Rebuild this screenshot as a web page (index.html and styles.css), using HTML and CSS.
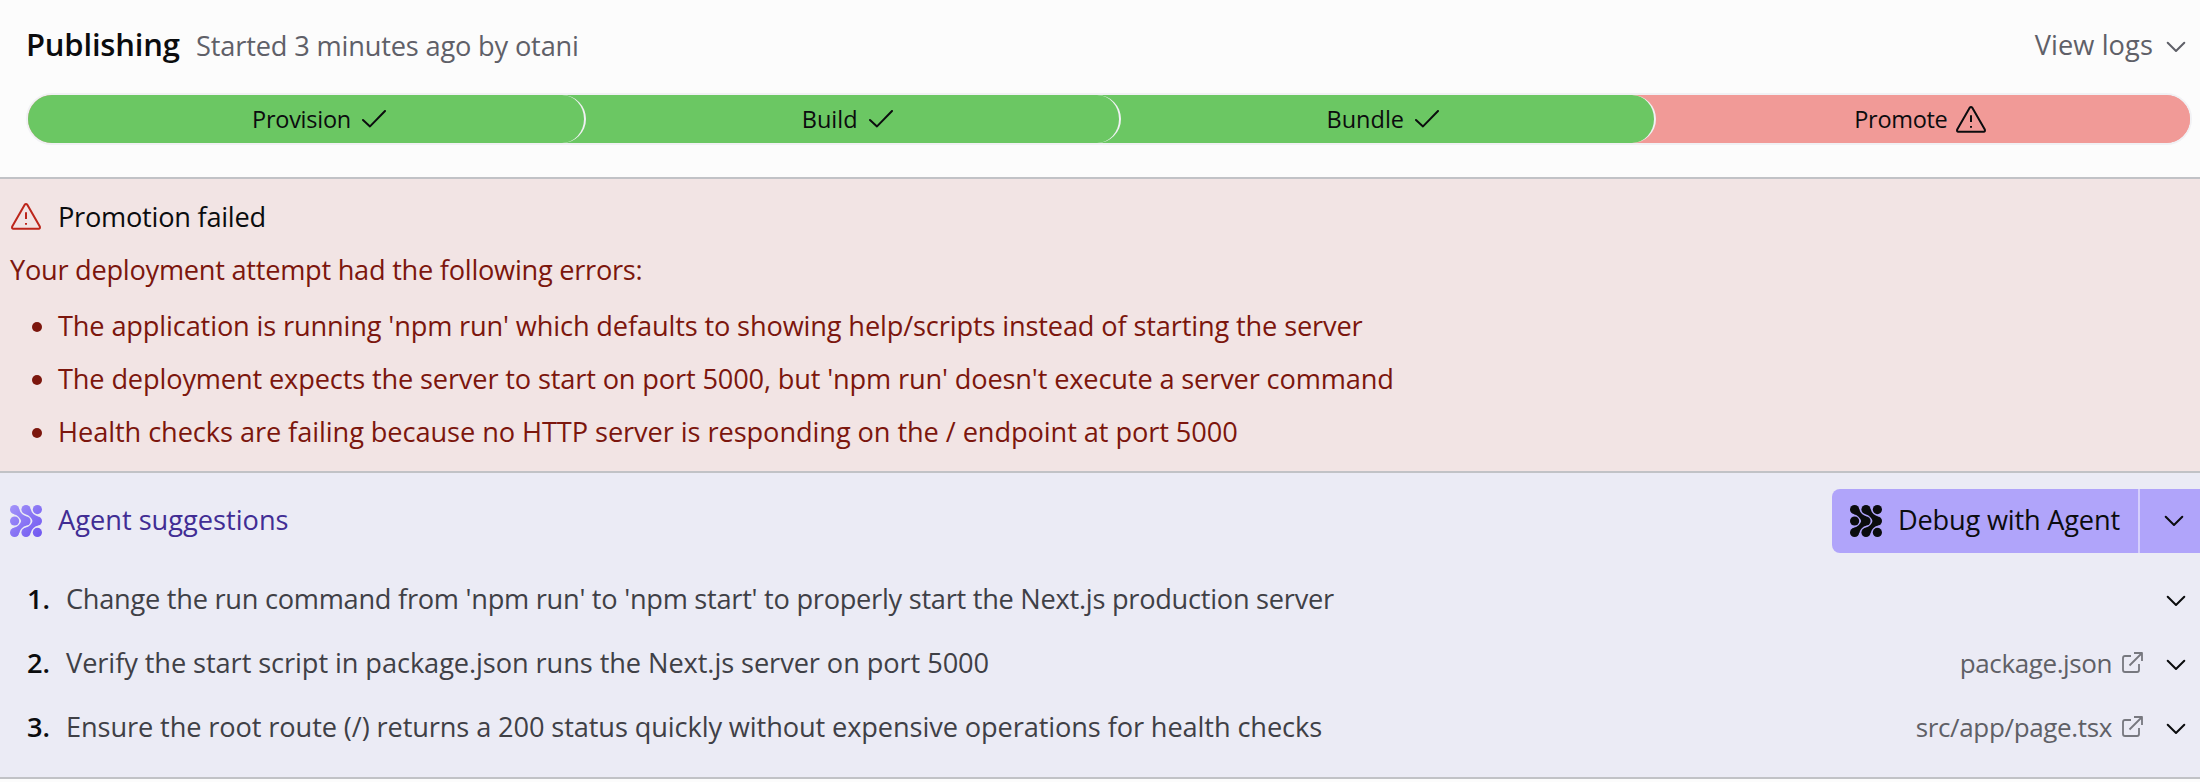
FILE: index.html
```html
<!DOCTYPE html>
<html lang="en">
<head>
<meta charset="utf-8">
<title>Publishing</title>
<link rel="stylesheet" href="styles.css">
</head>
<body>
<svg class="defs" width="0" height="0" aria-hidden="true">
  <defs>
    <linearGradient id="violet" gradientUnits="userSpaceOnUse" x1="0" y1="0" x2="32" y2="32">
      <stop offset="0" stop-color="#a394f9"/><stop offset="1" stop-color="#6f56f0"/>
    </linearGradient>
    <symbol id="agent" viewBox="0 0 32 32">
      <circle cx="4.6" cy="4.6" r="4.6"/><circle cx="16" cy="4.6" r="4.6"/><circle cx="27.4" cy="4.6" r="4.6"/>
      <circle cx="4.6" cy="16" r="4.6"/><circle cx="16" cy="16" r="4.6"/><circle cx="27.4" cy="16" r="4.6"/>
      <circle cx="4.6" cy="27.4" r="4.6"/><circle cx="16" cy="27.4" r="4.6"/><circle cx="27.4" cy="27.4" r="4.6"/>
      <path d="M9.2 4Q10.8 9.8 16.6 11.4L11.4 16.6Q9.8 10.8 4 9.2Z"/>
      <path d="M20.6 4Q22.2 9.8 28 11.4L22.8 16.6Q21.2 10.8 15.4 9.2Z"/>
      <path d="M9.2 28Q10.8 22.2 16.6 20.6L11.4 15.4Q9.8 21.2 4 22.8Z"/>
      <path d="M20.6 28Q22.2 22.2 28 20.6L22.8 15.4Q21.2 21.2 15.4 22.8Z"/>
    </symbol>
    <symbol id="chevron" viewBox="0 0 20 12"><path d="M1.7 1.7L10 10L18.3 1.7" fill="none" stroke="currentColor" stroke-width="2" stroke-linecap="round" stroke-linejoin="round"/></symbol>
    <symbol id="check" viewBox="0 0 24 18"><path d="M1 10L8 16.4L23 1" fill="none" stroke="currentColor" stroke-width="2" stroke-linecap="round" stroke-linejoin="round"/></symbol>
    <symbol id="warn" viewBox="0 0 30 27"><path d="M13.7 1.7Q15 .3 16.3 1.7L28.8 23.6Q29.4 25.6 27.6 25.8H2.4Q.6 25.6 1.2 23.6ZM15 9.3V16M15 20V21.8" fill="none" stroke="currentColor" stroke-width="2" stroke-linejoin="round"/></symbol>
    <symbol id="external" viewBox="0 0 22 22"><path d="M10 4H4Q2 4 2 6V18Q2 20 4 20H16Q18 20 18 18V12M13 1H21V9M20.5 1.5L8.5 13.5" fill="none" stroke="currentColor" stroke-width="1.8" stroke-linejoin="round"/></symbol>
  </defs>
</svg>

<header class="header">
  <div class="heading">
    <h1 class="title">Publishing</h1>
    <span class="started">Started 3 minutes ago by otani</span>
  </div>
  <div class="logs"><span class="logs-label">View logs</span><svg class="chevron"><use href="#chevron"/></svg></div>
</header>

<div class="stages">
  <div class="stage stage-1"><span class="t-provision">Provision</span><svg class="check"><use href="#check"/></svg></div>
  <div class="stage stage-2"><span class="t-build">Build</span><svg class="check"><use href="#check"/></svg></div>
  <div class="stage stage-3"><span class="t-bundle">Bundle</span><svg class="check"><use href="#check"/></svg></div>
  <div class="stage stage-4"><span class="t-promote">Promote</span><svg class="warn"><use href="#warn"/></svg></div>
</div>

<section class="errors">
  <div class="errors-head"><svg class="warn"><use href="#warn"/></svg><span class="t-failed">Promotion failed</span></div>
  <p class="errors-intro"><span class="t-intro">Your deployment attempt had the following errors:</span></p>
  <ul class="error-list">
    <li><span class="t-e1">The application is running 'npm run' which defaults to showing help/scripts instead of starting the server</span></li>
    <li><span class="t-e2">The deployment expects the server to start on port 5000, but 'npm run' doesn't execute a server command</span></li>
    <li><span class="t-e3">Health checks are failing because no HTTP server is responding on the / endpoint at port 5000</span></li>
  </ul>
</section>

<section class="agent">
  <div class="agent-head">
    <svg class="agent-icon gradient"><use href="#agent"/></svg>
    <span class="agent-title">Agent suggestions</span>
    <div class="button">
      <div class="button-main"><svg class="agent-icon"><use href="#agent"/></svg><span class="button-label">Debug with Agent</span></div>
      <div class="button-more"><svg class="chevron"><use href="#chevron"/></svg></div>
    </div>
  </div>
  <div class="row"><span class="num">1.</span><span class="t-s1">Change the run command from 'npm run' to 'npm start' to properly start the Next.js production server</span><svg class="chevron"><use href="#chevron"/></svg></div>
  <div class="row"><span class="num">2.</span><span class="t-s2">Verify the start script in package.json runs the Next.js server on port 5000</span><span class="file t-f1">package.json</span><svg class="external"><use href="#external"/></svg><svg class="chevron"><use href="#chevron"/></svg></div>
  <div class="row"><span class="num">3.</span><span class="t-s3">Ensure the root route (/) returns a 200 status quickly without expensive operations for health checks</span><span class="file t-f2">src/app/page.tsx</span><svg class="external"><use href="#external"/></svg><svg class="chevron"><use href="#chevron"/></svg></div>
</section>
</body>
</html>
```
FILE: styles.css
```css
* { box-sizing: border-box; }
body { margin: 0; background: #fcfcfc; color: #0b0c0e; font-family: "Open Sans", sans-serif; font-size: 27.2px; white-space: nowrap; overflow: hidden; }
svg { display: block; flex: none; }
.defs { position: absolute; }
.chevron { width: 20px; height: 12px; }
.check { width: 24px; height: 18px; }
.warn { width: 30px; height: 27px; }
.external { width: 22px; height: 22px; }
.agent-icon { width: 32px; height: 32px; fill: #0b0c0e; }
.gradient { fill: url(#violet); }

.header { display: flex; justify-content: space-between; height: 93px; padding: 19px 14px 0 26px; }
.heading { display: flex; align-items: baseline; gap: 16px; height: 50px; line-height: 50px; }
.title { margin: 0; font-size: 31px; font-weight: 600; width: 154px; letter-spacing: -0.2px; }
.started { color: #5f6068; letter-spacing: -0.165px; }
.logs { display: flex; align-items: center; gap: 13px; height: 50px; color: #5f6068; }
.logs-label { letter-spacing: 0.1px; }
.logs .chevron { margin-top: 6px; }

.stages { display: flex; height: 52px; margin: 0 8px 0 26px; border: 2px solid #f1f1f4; border-radius: 26px; background: #f19a97; overflow: hidden; }
.stage { display: flex; align-items: center; height: 48px; font-size: 23.5px; gap: 11px; background: #6bc763; margin-left: -30px; }
.stage > span { padding-bottom: 1px; }
/* Each finished stage is stacked above the next one so its rounded end stays visible. */
.stage:nth-child(-n+3) { border-right: 2px solid #f1f1f4; border-radius: 0 24px 24px 0; }
.stage-1 { width: 558px; margin-left: 0; padding-left: 224px; z-index: 4; }
.stage-2 { width: 565px; padding-left: 246px; z-index: 3; }
.stage-3 { width: 566px; padding-left: 236px; z-index: 2; }
.stage-4 { width: 564px; padding-left: 228px; background: #f19a97; gap: 8px; }
.t-provision { letter-spacing: -0.25px; }
.t-promote { letter-spacing: -0.3px; }

.errors { height: 296px; margin-top: 32px; border-top: 2px solid #c1c2c6; padding-top: 11px; background: #f2e4e4; color: #7c160d; line-height: 53px; }
.errors-head { display: flex; align-items: center; gap: 17px; height: 53px; padding-left: 11px; color: #0b0c0e; }
.errors-head .warn { color: #bd261b; }
.errors-intro { margin: 0; padding-left: 10px; }
.error-list { margin: 3px 0 0; padding: 0; list-style: none; }
.error-list li { display: flex; align-items: center; height: 53px; padding-left: 32px; gap: 16px; }
.error-list li::before { content: ""; width: 10px; height: 10px; margin-top: 3px; border-radius: 50%; background: currentColor; }
.t-failed { letter-spacing: -0.25px; }
.t-intro { letter-spacing: -0.26px; }
.t-e1 { letter-spacing: -0.145px; }
.t-e2 { letter-spacing: -0.15px; }
.t-e3 { letter-spacing: -0.08px; }

.agent { height: 308px; margin-top: -2px; border-top: 2px solid #c1c2c6; border-bottom: 2px solid #c1c2c6; background: #ebebf5; color: #3f4046; padding-top: 16px; }
.agent-head { display: flex; align-items: center; height: 64px; padding-left: 10px; margin-bottom: 14px; }
.agent-title { margin-left: 16px; padding-bottom: 3px; color: #412d94; }
.button { display: flex; width: 368px; height: 64px; margin-left: auto; color: #0b0c0e; background: #b0a4fa; border-radius: 8px 0 0 8px; }
.button-main { display: flex; align-items: center; width: 306px; padding-left: 18px; }
.button-label { margin-left: 16px; padding-bottom: 3px; letter-spacing: -0.2px; }
.button-more { display: flex; align-items: center; width: 62px; padding-left: 24px; border-left: 2px solid #d5cffc; }
.row { display: flex; align-items: center; height: 64px; padding: 0 14px 0 27px; }
.row > span { padding-bottom: 1px; }
.num { width: 39px; color: #0b0c0e; font-weight: 600; }
.row .chevron { margin-left: auto; margin-top: 4px; color: #0b0c0e; }
.row .external { margin-left: 9px; margin-bottom: 1px; color: #77787f; }
.row .external + .chevron { margin-left: 23px; }
.file { margin-left: auto; color: #5f6066; font-size: 26px; }
.t-s1 { letter-spacing: -0.264px; }
.t-s2 { letter-spacing: -0.08px; }
.t-s3 { letter-spacing: -0.11px; }
.t-f1 { letter-spacing: -0.4px; }
.t-f2 { letter-spacing: -0.35px; }
```
